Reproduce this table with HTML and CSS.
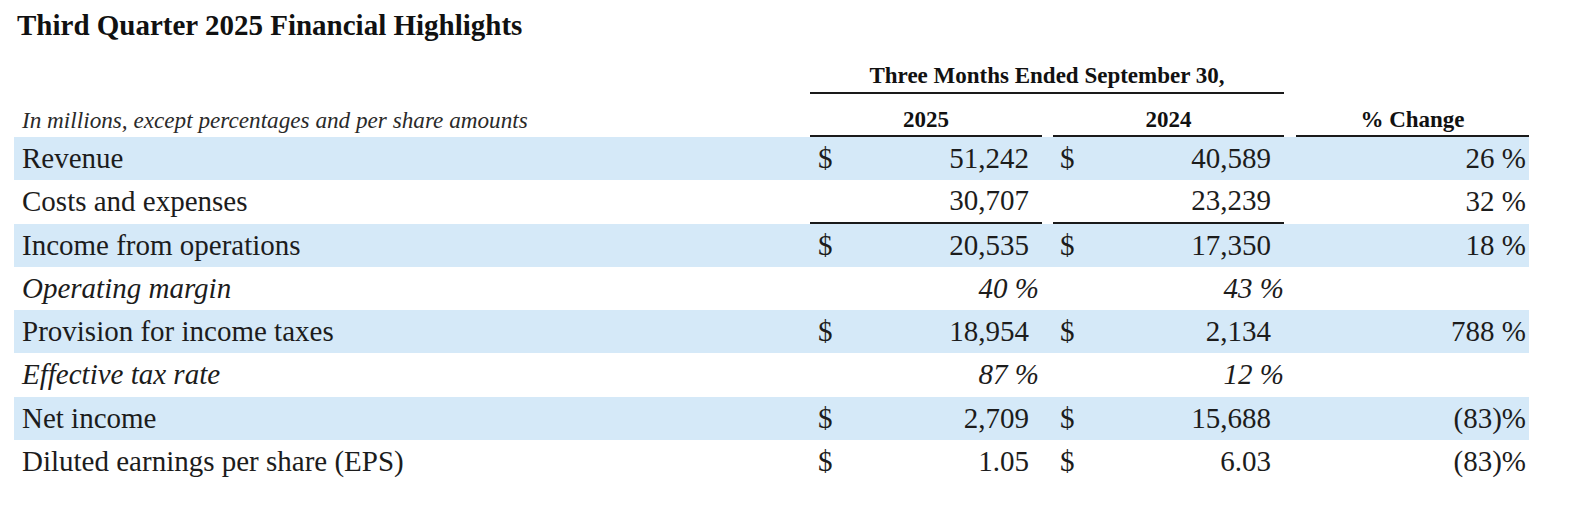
FILE: index.html
```html
<!DOCTYPE html>
<html lang="en">
<head>
<meta charset="utf-8">
<title>Third Quarter 2025 Financial Highlights</title>
<link rel="stylesheet" href="styles.css">
</head>
<body>
<div class="report">
  <h1 class="title">Third Quarter 2025 Financial Highlights</h1>
  <div class="table">
    <div class="row head-a">
      <div class="period">Three Months Ended September 30,</div>
    </div>
    <div class="row head-b">
      <div class="label note">In millions, except percentages and per share amounts</div>
      <div class="year c1">2025</div>
      <div class="year c2">2024</div>
      <div class="year c3">% Change</div>
    </div>

    <div class="row line shaded">
      <div class="label">Revenue</div>
      <div class="val c1"><span>$</span><span>51,242</span></div>
      <div class="val c2"><span>$</span><span>40,589</span></div>
      <div class="chg c3">26 %</div>
    </div>
    <div class="row line">
      <div class="label">Costs and expenses</div>
      <div class="val c1 ruled end"><span>30,707</span></div>
      <div class="val c2 ruled end"><span>23,239</span></div>
      <div class="chg c3">32 %</div>
    </div>
    <div class="row line shaded">
      <div class="label">Income from operations</div>
      <div class="val c1"><span>$</span><span>20,535</span></div>
      <div class="val c2"><span>$</span><span>17,350</span></div>
      <div class="chg c3">18 %</div>
    </div>
    <div class="row line">
      <div class="label ital">Operating margin</div>
      <div class="val c1 pct">40 %</div>
      <div class="val c2 pct">43 %</div>
      <div class="chg c3"></div>
    </div>
    <div class="row line shaded">
      <div class="label">Provision for income taxes</div>
      <div class="val c1"><span>$</span><span>18,954</span></div>
      <div class="val c2"><span>$</span><span>2,134</span></div>
      <div class="chg c3">788 %</div>
    </div>
    <div class="row line">
      <div class="label ital">Effective tax rate</div>
      <div class="val c1 pct">87 %</div>
      <div class="val c2 pct">12 %</div>
      <div class="chg c3"></div>
    </div>
    <div class="row line shaded">
      <div class="label">Net income</div>
      <div class="val c1"><span>$</span><span>2,709</span></div>
      <div class="val c2"><span>$</span><span>15,688</span></div>
      <div class="chg c3">(83)%</div>
    </div>
    <div class="row line">
      <div class="label">Diluted earnings per share (EPS)</div>
      <div class="val c1"><span>$</span><span>1.05</span></div>
      <div class="val c2"><span>$</span><span>6.03</span></div>
      <div class="chg c3">(83)%</div>
    </div>
  </div>
</div>
</body>
</html>
```

FILE: styles.css
```css
html, body {
  margin: 0;
  padding: 0;
  background: #ffffff;
}

.report {
  font-family: "Liberation Serif", "Times New Roman", serif;
  color: #1c1c1c;
}

.title {
  margin: 0;
  padding: 8px 0 0 17px;
  font-size: 29px;
  line-height: 34px;
  font-weight: bold;
  color: #111;
}

.table {
  margin-left: 14px;
  width: 1515px;
}

.row {
  display: grid;
  grid-template-columns: 796px 232px 11px 231px 12px 233px;
  box-sizing: border-box;
}

.c1 { grid-column: 2; }
.c2 { grid-column: 4; }
.c3 { grid-column: 6; }

/* header rows */
.head-a {
  height: 52px;
}

.period {
  grid-column: 2 / 5;
  display: flex;
  align-items: flex-end;
  justify-content: center;
  padding-bottom: 3px;
  border-bottom: 2px solid #1a1a1a;
  font-size: 23px;
  line-height: 26px;
  font-weight: bold;
  color: #111;
}

.head-b {
  height: 43px;
  font-size: 23px;
  line-height: 26px;
}

.head-b > div {
  display: flex;
  align-items: flex-end;
  padding-bottom: 2px;
}

.year {
  justify-content: center;
  font-weight: bold;
  border-bottom: 2px solid #1a1a1a;
  color: #111;
}

.head-b .note {
  grid-column: 1;
  padding-left: 8px;
  font-style: italic;
  font-size: 23.2px;
  color: #2a2a2a;
  border-bottom: 2px solid transparent;
}

/* body rows */
.line {
  height: 43.25px;
  font-size: 29px;
  line-height: 43.25px;
}

.shaded {
  background: #d5e9f8;
}

.label {
  grid-column: 1;
  padding-left: 8px;
  white-space: nowrap;
}

.ital {
  font-style: italic;
}

.val {
  display: flex;
  justify-content: space-between;
  box-sizing: border-box;
  white-space: nowrap;
}

.val.c1 {
  padding: 0 13px 0 8px;
}

.val.c2 {
  padding: 0 13px 0 7px;
}

.val.end {
  justify-content: flex-end;
}

.val.pct {
  justify-content: flex-end;
  font-style: italic;
}

.val.c1.pct {
  padding-right: 3px;
}

.val.c2.pct {
  padding-right: 0;
}

.ruled {
  border-bottom: 2px solid #1a1a1a;
  line-height: 41.25px;
}

.chg {
  text-align: right;
  padding-right: 3px;
  white-space: nowrap;
}
```
